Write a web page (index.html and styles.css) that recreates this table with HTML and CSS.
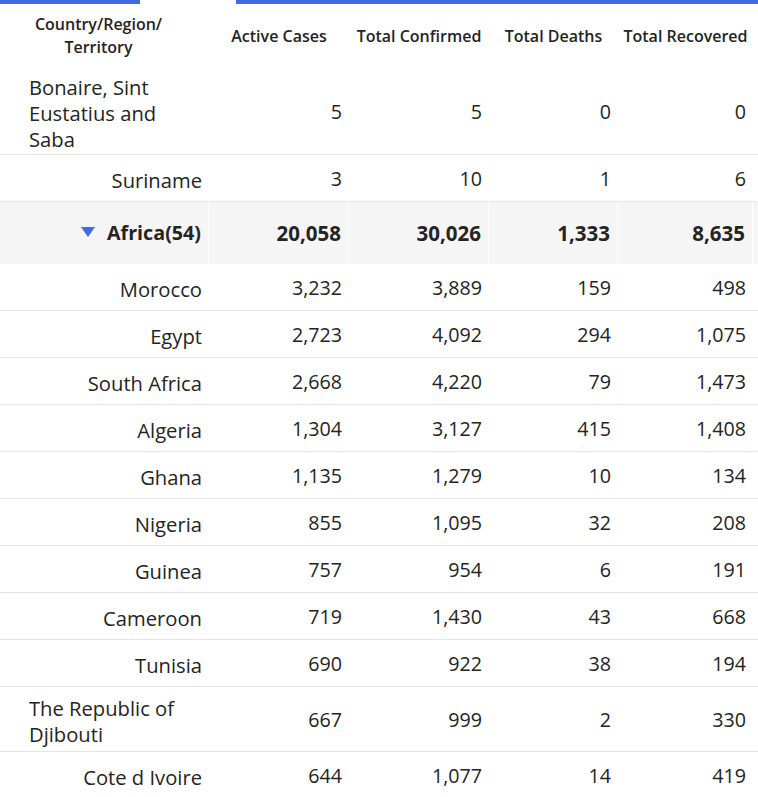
FILE: index.html
```html
<!DOCTYPE html>
<html lang="en">
<head>
<meta charset="utf-8">
<title>Cases by Country/Region/Territory</title>
<link rel="stylesheet" href="styles.css">
</head>
<body>
<div class="topbars">
  <div class="bar bar-left"></div>
  <div class="bar-gap"></div>
  <div class="bar bar-right"></div>
</div>
<div class="table">
  <div class="row head">
    <div class="cell hc country-h">Country/Region/<br>Territory</div>
    <div class="cell hc">Active Cases</div>
    <div class="cell hc">Total Confirmed</div>
    <div class="cell hc">Total Deaths</div>
    <div class="cell hc">Total Recovered</div>
  </div>

  <div class="row wrap3">
    <div class="cell country"><span class="name">Bonaire, Sint Eustatius and Saba</span></div>
    <div class="cell num">5</div><div class="cell num">5</div><div class="cell num">0</div><div class="cell num">0</div>
  </div>
  <div class="row">
    <div class="cell country"><span class="name">Suriname</span></div>
    <div class="cell num">3</div><div class="cell num">10</div><div class="cell num">1</div><div class="cell num">6</div>
  </div>
  <div class="row group">
    <div class="cell country"><span class="caret"></span><span class="gname">Africa(54)</span></div>
    <div class="cell num">20,058</div><div class="cell num">30,026</div><div class="cell num">1,333</div><div class="cell num">8,635</div>
    <div class="cell filler"></div>
  </div>
  <div class="row">
    <div class="cell country"><span class="name">Morocco</span></div>
    <div class="cell num">3,232</div><div class="cell num">3,889</div><div class="cell num">159</div><div class="cell num">498</div>
  </div>
  <div class="row">
    <div class="cell country"><span class="name">Egypt</span></div>
    <div class="cell num">2,723</div><div class="cell num">4,092</div><div class="cell num">294</div><div class="cell num">1,075</div>
  </div>
  <div class="row">
    <div class="cell country"><span class="name">South Africa</span></div>
    <div class="cell num">2,668</div><div class="cell num">4,220</div><div class="cell num">79</div><div class="cell num">1,473</div>
  </div>
  <div class="row">
    <div class="cell country"><span class="name">Algeria</span></div>
    <div class="cell num">1,304</div><div class="cell num">3,127</div><div class="cell num">415</div><div class="cell num">1,408</div>
  </div>
  <div class="row">
    <div class="cell country"><span class="name">Ghana</span></div>
    <div class="cell num">1,135</div><div class="cell num">1,279</div><div class="cell num">10</div><div class="cell num">134</div>
  </div>
  <div class="row">
    <div class="cell country"><span class="name">Nigeria</span></div>
    <div class="cell num">855</div><div class="cell num">1,095</div><div class="cell num">32</div><div class="cell num">208</div>
  </div>
  <div class="row">
    <div class="cell country"><span class="name">Guinea</span></div>
    <div class="cell num">757</div><div class="cell num">954</div><div class="cell num">6</div><div class="cell num">191</div>
  </div>
  <div class="row">
    <div class="cell country"><span class="name">Cameroon</span></div>
    <div class="cell num">719</div><div class="cell num">1,430</div><div class="cell num">43</div><div class="cell num">668</div>
  </div>
  <div class="row">
    <div class="cell country"><span class="name">Tunisia</span></div>
    <div class="cell num">690</div><div class="cell num">922</div><div class="cell num">38</div><div class="cell num">194</div>
  </div>
  <div class="row wrap2">
    <div class="cell country"><span class="name">The Republic of Djibouti</span></div>
    <div class="cell num">667</div><div class="cell num">999</div><div class="cell num">2</div><div class="cell num">330</div>
  </div>
  <div class="row">
    <div class="cell country"><span class="name">Cote d Ivoire</span></div>
    <div class="cell num">644</div><div class="cell num">1,077</div><div class="cell num">14</div><div class="cell num">419</div>
  </div>
</div>
</body>
</html>
```

FILE: styles.css
```css
html, body {
  margin: 0;
  padding: 0;
  background: #ffffff;
  overflow: hidden;
}
body {
  width: 758px;
  height: 797px;
  font-family: "Open Sans", "Noto Sans", "Liberation Sans", sans-serif;
  color: #252423;
}
.topbars {
  display: flex;
  height: 4px;
}
.bar {
  background: #4169e1;
  height: 4px;
}
.bar-left { width: 140px; }
.bar-gap { width: 96px; }
.bar-right { flex: 1; }

.table {
  display: flex;
  flex-direction: column;
}
.row {
  display: grid;
  grid-template-columns: 209px 140px 140px 129px 135px 5px;
  align-items: center;
  min-height: 46px;
  border-bottom: 1px solid #e6e6e6;
}
.cell {
  box-sizing: border-box;
  padding: 2px 7px 0 0;
  font-size: 19.7px;
  line-height: 26px;
  text-align: right;
  white-space: nowrap;
}
.head {
  height: 64px;
  border-bottom: none;
}
.hc {
  font-size: 16px;
  font-weight: 600;
  line-height: 23px;
  text-align: center;
  padding: 0;
}
.country-h {
  padding-right: 12px;
}
.country {
  padding-left: 29px;
  padding-top: 4px;
  font-size: 20.2px;
}
.name {
  display: inline-block;
  text-align: left;
  white-space: normal;
}
.wrap3 { height: 86px; }
.wrap2 { height: 64px; }
.group {
  background: #f5f5f5;
  height: 62px;
  border-bottom: none;
  align-items: stretch;
}
.group .cell {
  display: flex;
  align-items: center;
  justify-content: flex-end;
  font-weight: 700;
  font-size: 20.5px;
  border-right: 1px solid #ffffff;
  padding-top: 0;
}
.group .country {
  font-size: 19.7px;
}
.group .filler {
  border-right: none;
}
.caret {
  width: 0;
  height: 0;
  border-left: 7.5px solid transparent;
  border-right: 7.5px solid transparent;
  border-top: 10px solid #4169e1;
  margin-right: 12px;
  margin-top: -2px;
}
.gname {
  display: inline-block;
}
```
